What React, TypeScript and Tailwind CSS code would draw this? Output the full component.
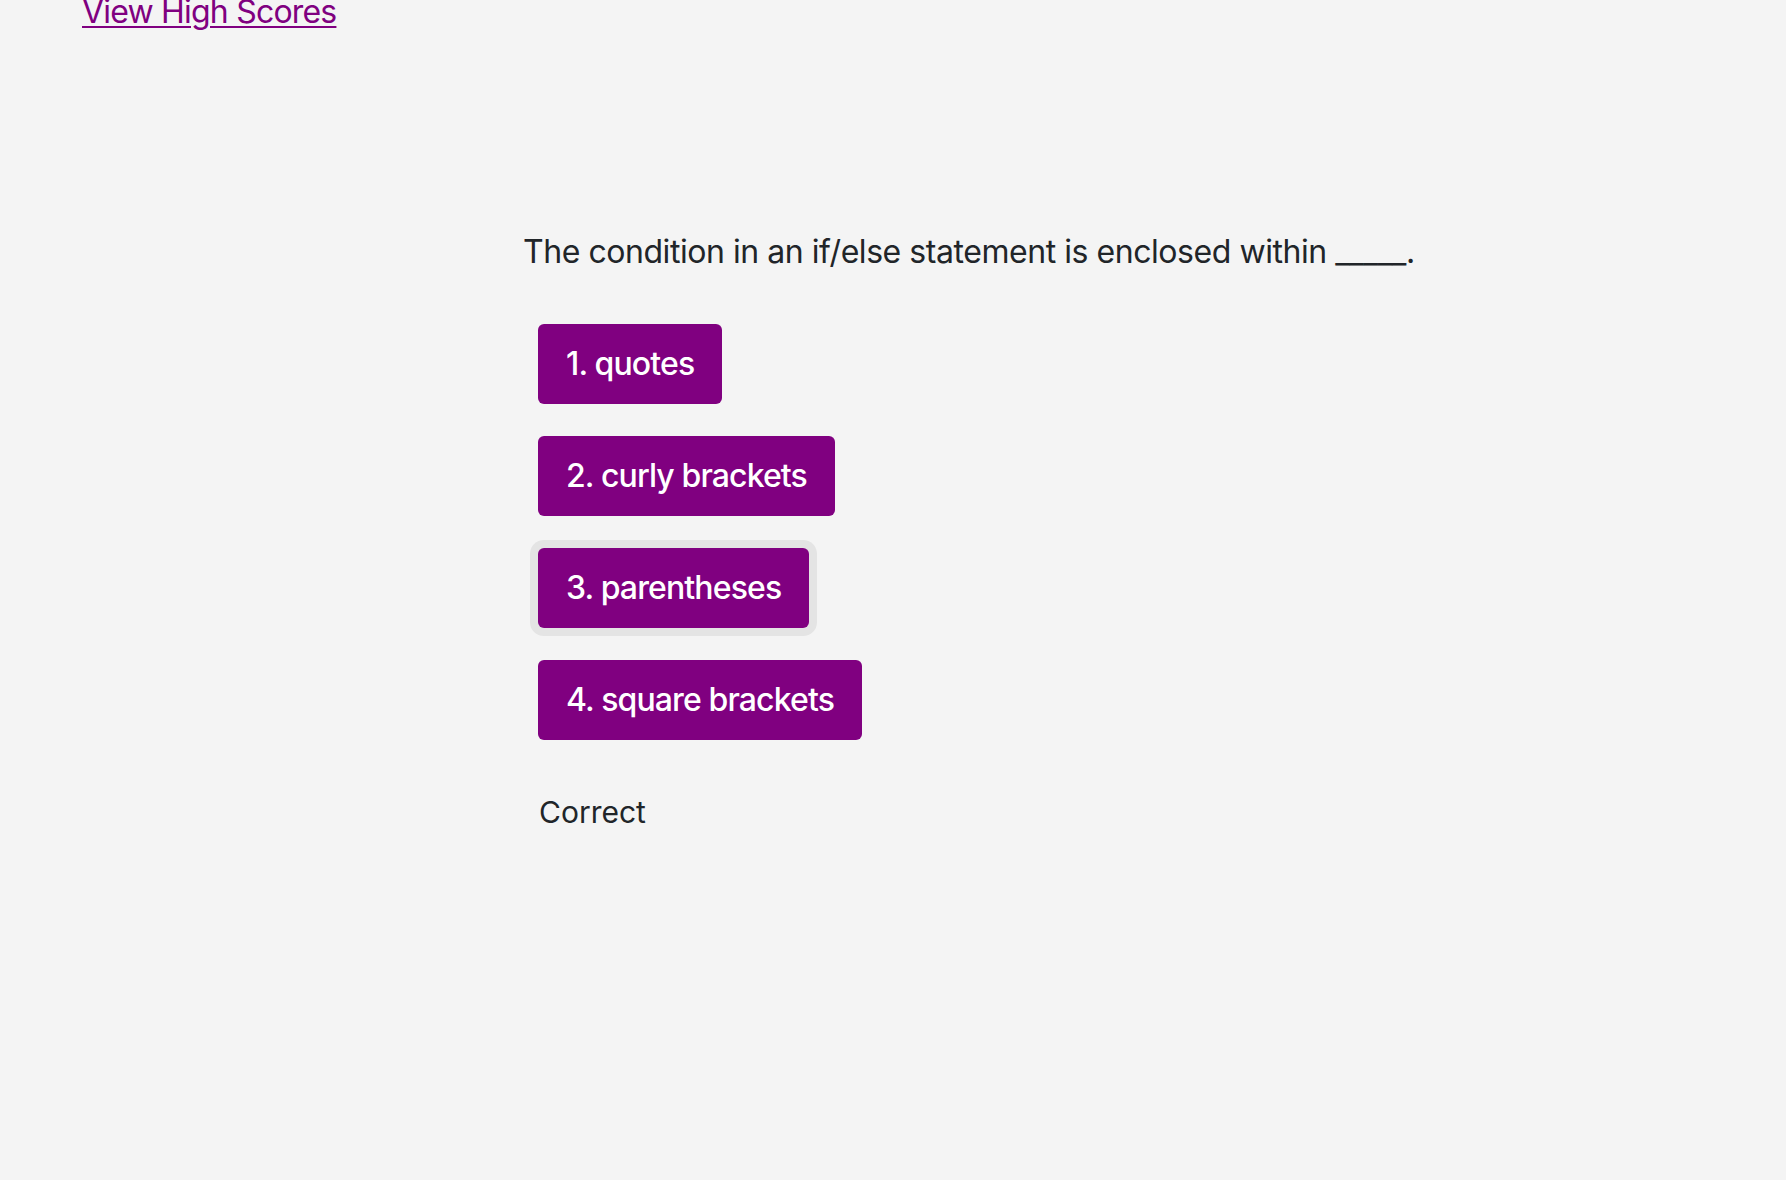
const choices = ["1. quotes", "2. curly brackets", "3. parentheses", "4. square brackets"];

export default function App() {
    return (
        <div className="min-h-screen bg-[#f4f4f4] text-[#212529] font-['Inter','Noto_Sans',sans-serif]">
            <header className="px-[82px]">
                <a href="#" className="block w-fit -mt-[4px] text-[32px] leading-none tracking-[-0.8px] text-[#800080] underline underline-offset-[3px] decoration-[2px]">
                    View High Scores
                </a>
            </header>

            <main className="pl-[523px] pt-[204px]">
                <p className="text-[32px] leading-[40px] tracking-[-0.45px]">
                    The condition in an if/else statement is enclosed within _____.
                </p>

                <div className="mt-[52px] ml-[15px] flex flex-col items-start gap-[32px]">
                    {choices.map((c, i) => (
                        <button
                            key={i}
                            className={
                                "h-[80px] px-[28px] rounded-[6px] bg-[#800080] text-white text-[32px] font-medium leading-none tracking-[-0.88px] " +
                                (i === 2 ? "ring-8 ring-[#e4e4e4]" : "")
                            }
                        >
                            {c}
                        </button>
                    ))}
                </div>

                <p className="mt-[52px] ml-[16px] text-[30px] leading-[40px]">Correct</p>
            </main>
        </div>
    );
}
